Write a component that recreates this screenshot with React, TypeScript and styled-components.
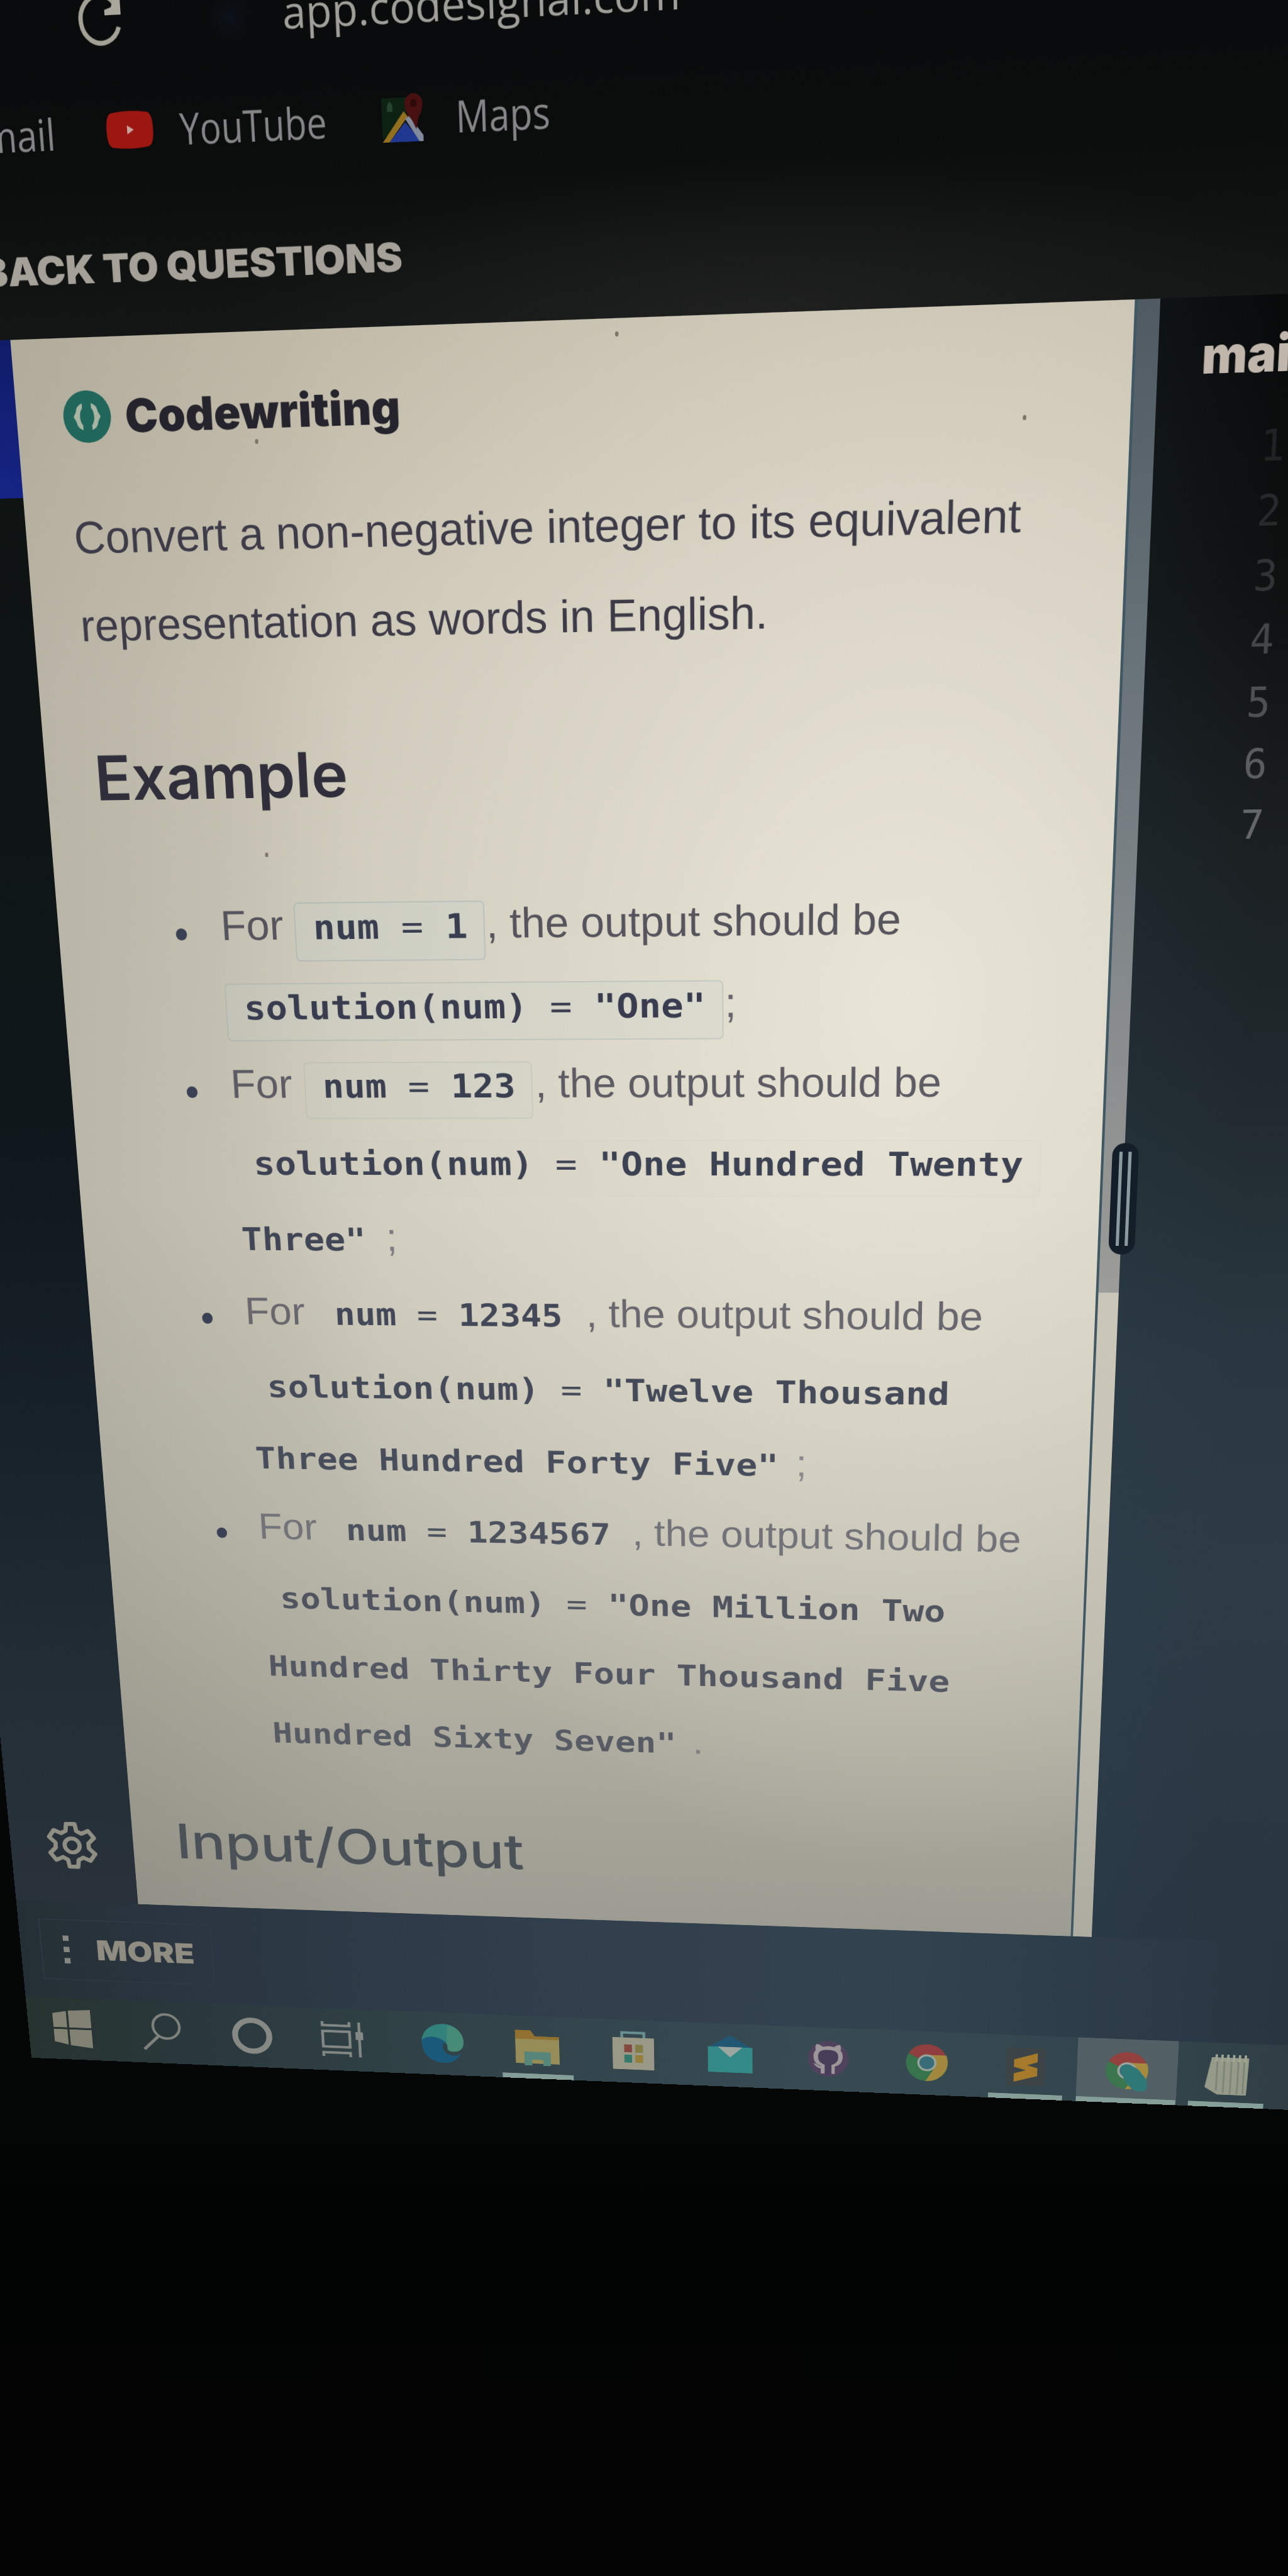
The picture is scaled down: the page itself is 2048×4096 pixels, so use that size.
import React, { useLayoutEffect, useRef, useState } from 'react';
import styled, { createGlobalStyle } from 'styled-components';

/* ---------- camera projection of the flat monitor ---------- */

const RAIL = 228;
const CHROME = 520;
const PANEL_W = 1700;
const PANEL_H = 2620;
const SCALE = 2048 / 2080;

type Pt = [number, number];
const corners: Pt[] = [
  [16.6, 549],
  [1874, 482],
  [1763, 3128],
  [223, 3075],
];

function cameraMatrix([p0, p1, p2, p3]: Pt[]) {
  const dx1 = p1[0] - p2[0];
  const dx2 = p3[0] - p2[0];
  const sx = p0[0] - p1[0] + p2[0] - p3[0];
  const dy1 = p1[1] - p2[1];
  const dy2 = p3[1] - p2[1];
  const sy = p0[1] - p1[1] + p2[1] - p3[1];
  const den = dx1 * dy2 - dx2 * dy1;
  const g = (sx * dy2 - dx2 * sy) / den;
  const h = (dx1 * sy - sx * dy1) / den;
  const a = p1[0] - p0[0] + g * p1[0];
  const b = p3[0] - p0[0] + h * p3[0];
  const d = p1[1] - p0[1] + g * p1[1];
  const e = p3[1] - p0[1] + h * p3[1];
  const row = (m: number, n: number, o: number) => {
    const mx = m / PANEL_W;
    const ny = n / PANEL_H;
    return [mx, ny, o - mx * RAIL - ny * CHROME];
  };
  const X = row(a, b, p0[0]).map((n) => n * SCALE);
  const Y = row(d, e, p0[1]).map((n) => n * SCALE);
  const W = row(g, h, 1);
  return [X[0], Y[0], 0, W[0], X[1], Y[1], 0, W[1], 0, 0, 1, 0, X[2], Y[2], 0, W[2]]
    .map((n) => n.toFixed(10))
    .join(',');
}

const sans = '"Liberation Sans", Arial, sans-serif';
const ui = '"Open Sans", "Noto Sans", sans-serif';
const brand = 'Inter, "Open Sans", sans-serif';
const mono = '"DejaVu Sans Mono", "Liberation Mono", monospace';

const Global = createGlobalStyle`
  html, body { margin: 0; padding: 0; background: #030404; }
  *, *::before, *::after { box-sizing: border-box; }
`;

const Room = styled.div`
  width: 2048px;
  height: 4096px;
  overflow: hidden;
  background: linear-gradient(180deg, #050606 0, #050606 3300px, #020303 3500px, #040404 4096px);
`;

const Monitor = styled.div`
  width: 2400px;
  height: 3466px;
  display: flex;
  flex-direction: column;
  transform-origin: 0 0;
  transform: matrix3d(${cameraMatrix(corners)});
  background: #0b0d0e;
`;

/* ---------- text that fills a given measure ---------- */

const Measure = styled.span<{ $w: number }>`
  display: inline-block;
  flex: none;
  width: ${(p) => p.$w}px;
  white-space: pre;
`;
const Stretch = styled.span`
  display: inline-block;
  transform-origin: 0 50%;
`;
const Thin = styled.span`
  font-weight: 400;
`;

function Fit({ w, children }: { w: number; children: string }) {
  const ref = useRef<HTMLSpanElement>(null);
  const [k, setK] = useState(1);
  useLayoutEffect(() => {
    if (ref.current) setK(w / ref.current.offsetWidth);
  }, [w, children]);
  const [head, tail] = children.split('=');
  return (
    <Measure $w={w}>
      <Stretch ref={ref} style={{ transform: `scaleX(${k})` }}>
        {head}
        {tail !== undefined && <Thin>=</Thin>}
        {tail}
      </Stretch>
    </Measure>
  );
}

/* ---------- browser chrome ---------- */

const Chrome = styled.header`
  height: ${CHROME}px;
  flex: none;
  display: flex;
  flex-direction: column;
  font-family: ${ui};
  font-size: 58px;
  color: #a09f99;
  background:
    radial-gradient(ellipse 800px 200px at 1350px 520px, rgba(34, 35, 34, 0.8) 0, transparent 100%),
    linear-gradient(180deg, #090a0b 0, #0b0c0c 55%, #131615 100%);
`;
const UrlRow = styled.div`
  height: 194px;
  padding-left: 362px;
  display: flex;
  align-items: center;
`;
const Favicon = styled.span`
  width: 70px;
  height: 70px;
  margin: 10px 42px 0 116px;
  border-radius: 50%;
  background: radial-gradient(circle, #0c1119 0, transparent 70%);
`;
const Bookmarks = styled.nav`
  height: 96px;
  padding-left: 172px;
  display: flex;
  align-items: center;
  color: #868587;
`;
const Mark = styled.span<{ $gap: number; $after: number }>`
  display: flex;
  margin-left: ${(p) => p.$gap}px;
  margin-right: ${(p) => p.$after}px;
`;
const Back = styled.div`
  margin-top: 95px;
  height: 84px;
  padding-left: 193px;
  font: 900 54px/84px ${brand};
  color: #a5a198;
`;

/* ---------- workspace ---------- */

const Workspace = styled.div`
  height: ${PANEL_H}px;
  flex: none;
  display: flex;
  position: relative;
`;
const Rail = styled.aside`
  width: ${RAIL}px;
  flex: none;
  display: flex;
  flex-direction: column;
  align-items: center;
  justify-content: space-between;
  background: linear-gradient(180deg, #0e1311 0, #0f1515 25%, #0f171b 45%, #17212a 65%, #232e37 85%, #29323b 100%);
`;
const ActiveTab = styled.div`
  width: 100%;
  height: 224px;
  background: linear-gradient(180deg, #101c68, #152484);
`;
const GearSlot = styled.div`
  height: 95px;
  margin-bottom: 66px;
`;
const Panel = styled.section`
  width: 1664px;
  flex: none;
  display: flex;
  flex-direction: column;
  background:
    radial-gradient(ellipse 1100px 1500px at 1350px 1000px, rgba(238, 234, 220, 0.85) 0, rgba(238, 234, 220, 0) 100%),
    linear-gradient(90deg, rgba(90, 88, 76, 0.16) 0, rgba(90, 88, 76, 0) 30%),
    linear-gradient(180deg, #c2bbaa 0, #cbc6b6 20%, #cdcabb 50%, #bdbbad 72%, #a9a79b 90%, #9d9c92 100%);
`;
const Speck = styled.i<{ $x: number; $y: number }>`
  position: absolute;
  left: ${(p) => RAIL + p.$x}px;
  top: ${(p) => p.$y}px;
  width: 5px;
  height: 7px;
  border-radius: 3px;
  background: #7d7465;
`;
const Title = styled.div`
  height: 222px;
  flex: none;
  padding-left: 73px;
  display: flex;
  align-items: center;
  gap: 22px;
  font: 900 65px/1 ${brand};
  color: #25242c;
`;
const Intro = styled.p`
  margin: 0;
  padding-left: 75px;
  font: 66px/128.5px ${sans};
  color: #3e3b48;
  display: flex;
  flex-direction: column;
  transform: rotate(0.2deg);
`;
const Heading = styled.h2<{ $top: number; $tone: string; $weight: number }>`
  margin: ${(p) => p.$top}px 0 0 79px;
  height: 120px;
  flex: none;
  font: ${(p) => p.$weight} 94px/122px ${brand};
  color: ${(p) => p.$tone};
`;
const List = styled.ul`
  margin: 109px 0 0;
  padding: 0;
  list-style: none;
`;
const Line = styled.li<{ $tone: string; $bullet?: boolean }>`
  height: 127px;
  padding-left: ${(p) => (p.$bullet ? 193 : 267)}px;
  display: flex;
  align-items: baseline;
  font: 66px/127px ${sans};
  color: ${(p) => p.$tone};
  &::before {
    content: '\\200b';
    width: 0;
  }
`;
const Dot = styled.i`
  width: 18px;
  height: 19px;
  margin: 0 56px 17px 0;
  border-radius: 50%;
  background: #3a4154;
`;
const Chip = styled.code<{ $box: number; $lead: number; $tone: string }>`
  margin-left: ${(p) => p.$lead}px;
  padding: 0 26px 14px 28px;
  font: bold 53px/75px ${mono};
  color: ${(p) => p.$tone};
  border: 2px solid rgba(140, 160, 165, ${(p) => p.$box * 0.34});
  border-radius: 8px;
  background: rgba(190, 208, 208, ${(p) => p.$box * 0.2});
`;
const Bare = styled.code<{ $tone: string }>`
  padding-left: 2px;
  font: bold 53px/75px ${mono};
  color: ${(p) => p.$tone};
`;
const Tail = styled.span<{ $gap: number }>`
  margin-left: ${(p) => p.$gap}px;
`;
const Scroller = styled.div`
  width: 36px;
  flex: none;
  border-left: 4px solid #3f5864;
  background: linear-gradient(180deg, #ccc8b9 0, #c9c6b8 70%, #adaca1 100%);
`;
const Thumb = styled.div`
  height: 1467px;
  background: linear-gradient(180deg, #4f5a62 0, #69737a 35%, #84898b 65%, #9c9c98 100%);
`;
const Grip = styled.div`
  position: absolute;
  left: ${RAIL + 1681}px;
  top: 1224px;
  width: 41px;
  height: 180px;
  border-radius: 20px;
  background: #131e28;
  display: flex;
  justify-content: center;
  gap: 9px;
  padding: 14px 0;
`;
const GripLine = styled.i`
  width: 5px;
  background: #8b9ba0;
`;
const Editor = styled.section`
  flex: 1;
  padding: 35px 0 0 62px;
  background:
    linear-gradient(90deg, rgba(45, 70, 86, 0.15) 0, transparent 40%),
    linear-gradient(180deg, #080909 0, #0f1111 15%, #1b2022 30%, #212b30 45%, #2a3841 60%, #2c3b46 75%, #293743 100%);
`;
const FileName = styled.div`
  font: 900 68px/84px ${brand};
  color: #c0b6ac;
  white-space: nowrap;
`;
const Gutter = styled.ol`
  margin: 39px 0 0;
  padding: 0;
  width: 124px;
  list-style: none;
`;
const Num = styled.li<{ $tone: string }>`
  height: 89.4px;
  text-align: right;
  font: 58px/89.4px ${mono};
  color: ${(p) => p.$tone};
`;

/* ---------- bottom bars ---------- */

const BottomBar = styled.div`
  height: 198px;
  flex: none;
  padding: 36px 0 0 38px;
  background: linear-gradient(90deg, #242f35 0, #2b3642 14%, #323f4d 45%, #334350 65%, #2a3945 88%, #27333c 100%);
`;
const More = styled.div`
  width: 322px;
  height: 124px;
  border: 2px solid #2f3943;
  display: flex;
  align-items: center;
  padding: 0 0 2px 41px;
  font: 900 56px/1 ${brand};
  color: #8f8c81;
`;
const Dots = styled.div`
  display: flex;
  flex-direction: column;
  gap: 12px;
  margin-right: 50px;
`;
const MoreDot = styled.i`
  width: 11px;
  height: 11px;
  background: #858780;
`;
const Taskbar = styled.footer`
  height: 128px;
  flex: none;
  display: flex;
  background: linear-gradient(90deg, #27332f 0, #29383b 12%, #32444a 35%, #384a52 60%, #33454c 85%, #2c3b40 100%);
`;
const Task = styled.div<{ $active?: boolean; $open?: boolean; $left?: number }>`
  width: 173.8px;
  flex: none;
  height: 128px;
  padding-top: 23px;
  padding-right: ${(p) => (p.$left || 0) * 2}px;
  display: flex;
  flex-direction: column;
  align-items: center;
  justify-content: space-between;
  background: ${(p) => (p.$active ? '#525f64' : 'transparent')};
  &::after {
    content: '';
    width: ${(p) => (p.$active ? 173 : 130)}px;
    height: 10px;
    background: ${(p) => (p.$active || p.$open ? '#859e98' : 'transparent')};
  }
  svg {
    opacity: 0.88;
  }
`;

/* ---------- drawings ---------- */

const Reload = () => (
  <svg width="80" height="80" viewBox="0 0 80 80" fill="none">
    <path d="M66 50 A29 31 0 1 1 62 20" stroke="#a3a096" strokeWidth="6.5" />
    <path d="M70 6 V34 H46 V27 L56 24 L62 6 Z" fill="#aaa79c" />
  </svg>
);
const YouTube = () => (
  <svg width="70" height="50" viewBox="0 0 70 50">
    <path d="M9 2 Q35 -2 61 2 Q70 3 70 25 Q70 47 61 48 Q35 52 9 48 Q0 47 0 25 Q0 3 9 2 Z" fill="#9c1711" />
    <path d="M31 19 L41 25 L31 31 Z" fill="#c9a49c" />
  </svg>
);
const MapsPin = () => (
  <svg width="66" height="68" viewBox="0 0 66 68">
    <path d="M2 8 H38 V36 L2 62 Z" fill="#0d2212" />
    <path d="M10 18 L14 12 L18 18 V26 H10 Z" fill="#26452e" />
    <path d="M2 66 L34 26 L40 33 L12 66 Z" fill="#93701f" />
    <path d="M12 66 L36 40 L58 66 Z" fill="#203890" />
    <path d="M36 36 L42 32 L62 58 V66 H56 Z" fill="#828b9b" />
    <path d="M36 16 a13 13 0 0 1 26 0 Q62 27 56 34 L52 50 Q46 36 41 32 Q36 26 36 16 Z" fill="#491011" />
    <circle cx="49" cy="16" r="5" fill="#2e0909" />
  </svg>
);
const CodeBadge = () => (
  <svg width="74" height="76" viewBox="0 0 74 76" fill="none">
    <circle cx="37" cy="38" r="37" fill="#20665a" />
    <path d="M30 19 Q21 22 20 31 L16 38 L20 45 Q21 54 30 57 V50 Q26 46 26 38 Q26 30 30 26 Z" fill="#a9b5a3" />
    <path d="M44 19 Q53 22 54 31 L58 38 L54 45 Q53 54 44 57 V50 Q48 46 48 38 Q48 30 44 26 Z" fill="#a9b5a3" />
  </svg>
);
const Gear = () => (
  <svg width="95" height="95" viewBox="0 0 96 96" fill="none" stroke="#8f8e83" strokeWidth="8" strokeLinejoin="round">
    <path d="M40 5 H56 L58 19 L67 24 L80 18 L90 32 L79 43 V53 L90 64 L80 78 L67 72 L58 77 L56 91 H40 L38 77 L29 72 L16 78 L6 64 L17 53 V43 L6 32 L16 18 L29 24 L38 19 Z" />
    <circle cx="48" cy="48" r="14" />
  </svg>
);
const Icon = ({ children }: { children: React.ReactNode }) => (
  <svg width="80" height="80" viewBox="0 0 80 80" fill="none">
    {children}
  </svg>
);
const Windows = () => (
  <Icon>
    <path d="M4 9 L30 4 V38 H4 Z M34 3 L76 0 V38 H34 Z M4 42 H30 V74 L4 68 Z M34 42 H76 V80 L34 75 Z" fill="#8f8d7d" />
  </Icon>
);
const Search = () => (
  <Icon>
    <circle cx="50" cy="28" r="25" stroke="#8b8d86" strokeWidth="5" />
    <path d="M35 48 L6 77" stroke="#8b8d86" strokeWidth="6" />
  </Icon>
);
const Cortana = () => (
  <Icon>
    <circle cx="40" cy="40" r="32" stroke="#94958e" strokeWidth="11" />
  </Icon>
);
const TaskView = () => (
  <Icon>
    <path d="M4 4 V12 H54 V4 M4 76 V68 H54 V76 M4 24 H54 V56 H4 Z M72 4 V76" stroke="#8f938f" strokeWidth="5" />
    <path d="M65 24 H79 V40 H65 Z" fill="#8f938f" />
  </Icon>
);
const Edge = () => (
  <Icon>
    <path d="M2 44 C0 16 20 0 42 0 C64 0 79 16 79 36 C79 52 68 58 56 56 C44 54 52 46 47 40 C38 30 8 28 2 44 Z" fill="#348a83" />
    <path d="M2 36 C8 24 34 24 46 38 C38 38 38 56 50 62 C58 66 66 66 73 60 C66 76 54 80 42 80 C18 80 1 64 2 36 Z" fill="#195d82" />
    <path d="M50 3 C70 6 79 20 79 36 C79 52 68 58 56 56 C46 53 53 46 48 40 Z" fill="#4a957c" />
  </Icon>
);
const Folder = () => (
  <Icon>
    <path d="M0 6 H28 L36 18 H80 V74 H0 Z" fill="#a0762c" />
    <path d="M0 24 H80 V74 H0 Z" fill="#a4965a" />
    <path d="M16 50 H64 V78 H50 V66 H30 V78 H16 Z" fill="#5b9081" />
  </Icon>
);
const Store = () => (
  <Icon>
    <path d="M20 14 V3 H60 V14" stroke="#719c99" strokeWidth="5" />
    <path d="M3 13 H78 V78 H3 Z" fill="#a9a48e" />
    <path d="M24 27 H38 V43 H24 Z" fill="#8f493d" />
    <path d="M44 27 H58 V43 H44 Z" fill="#8d8545" />
    <path d="M24 48 H38 V64 H24 Z" fill="#35816f" />
    <path d="M44 48 H58 V64 H44 Z" fill="#a38738" />
  </Icon>
);
const Mail = () => (
  <Icon>
    <path d="M0 26 L40 0 L80 26 Z" fill="#205a78" />
    <path d="M0 24 H80 V76 H0 Z" fill="#33938f" />
    <path d="M18 24 H62 L40 45 Z" fill="#a9b3ac" />
  </Icon>
);
const GitHub = () => (
  <Icon>
    <circle cx="40" cy="40" r="36" fill="#54425f" />
    <path
      d="M27 70 V60 C18 59 15 50 14 50 C20 50 22 56 28 55 C17 52 14 44 14 35 C14 29 16 26 18 23 C17 19 17 15 19 11 C24 11 28 14 31 16 C37 14 44 14 50 16 C54 13 57 11 61 11 C63 15 63 19 62 23 C65 26 66 30 66 35 C66 46 60 53 52 55 V70"
      fill="#aaa1a4"
    />
    <path d="M22 36 C22 24 30 22 40 22 C50 22 58 24 58 36 C58 46 52 50 46 52 V72 H34 V52 C28 50 22 46 22 36 Z" fill="#4c3d5a" />
  </Icon>
);
const ChromeLogo = ({ badge }: { badge?: boolean }) => (
  <Icon>
    <circle cx="40" cy="40" r="37" fill="#387a4c" />
    <path d="M40 40 L8 22 C20 -4 62 -4 73 24 H40 Z" fill="#9c3e3b" />
    <path d="M40 24 H74 C84 52 64 78 38 77 L55 47 Z" fill="#b1913c" />
    <circle cx="40" cy="40" r="17" fill="#a5b0a6" />
    <circle cx="40" cy="40" r="13" fill="#39717f" />
    {badge && <path d="M30 30 Q56 26 66 46 Q80 58 74 78 Q60 88 46 72 Q30 56 30 30 Z" fill="#2a7d7b" />}
  </Icon>
);
const Sublime = () => (
  <Icon>
    <path d="M6 2 H74 V78 H6 Z" fill="#3f4447" />
    <path d="M19 26 L60 12 V30 L42 37 L60 42 V58 L19 71 V54 L40 47 L19 41 Z" fill="#b58227" />
  </Icon>
);
const Notepad = () => (
  <Icon>
    <path d="M12 6 H76 L74 80 H24 L2 66 Z" fill="#a3a891" />
    <path d="M20 0 V14 M30 0 V14 M40 0 V14 M50 0 V14 M60 0 V14 M70 0 V14" stroke="#aeb39b" strokeWidth="4" />
    <path d="M22 14 V72 M34 14 V76 M46 14 V78 M58 14 V78 M68 14 V78" stroke="#858d7d" strokeWidth="3" />
  </Icon>
);

/* ---------- content ---------- */

const lineTones = ['#202323', '#272a2a', '#303434', '#43474a', '#4d5152', '#5a5e5f', '#656868'];

export default function App() {
  return (
    <Room>
      <Global />
      <Monitor>
        <Chrome>
          <UrlRow>
            <Reload />
            <Favicon />
            <Fit w={574}>app.codesignal.com</Fit>
          </UrlRow>
          <Bookmarks>
            <Fit w={149}>Gmail</Fit>
            <Mark $gap={78} $after={40}>
              <YouTube />
            </Mark>
            <Fit w={218}>YouTube</Fit>
            <Mark $gap={80} $after={44}>
              <MapsPin />
            </Mark>
            <Fit w={138}>Maps</Fit>
          </Bookmarks>
          <Back>
            <Fit w={638}>BACK TO QUESTIONS</Fit>
          </Back>
        </Chrome>

        <Workspace>
          <Rail>
            <ActiveTab />
            <GearSlot>
              <Gear />
            </GearSlot>
          </Rail>
          <Panel>
            <Title>
              <CodeBadge />
              <Fit w={422}>Codewriting</Fit>
            </Title>
            <Intro>
              <Fit w={1436}>Convert a non-negative integer to its equivalent</Fit>
              <Fit w={1064}>representation as words in English.</Fit>
            </Intro>
            <Heading $top={102} $tone="#2f2e3a" $weight={600}>
              <Fit w={406}>Example</Fit>
            </Heading>
            <List>
              <Line $bullet $tone="#55535c">
                <Dot />
                <Fit w={102}>For</Fit>
                <Chip $box={1} $lead={18} $tone="#383d4f">
                  <Fit w={248}>num = 1</Fit>
                </Chip>
                <Tail $gap={2}>
                  <Fit w={650}>, the output should be</Fit>
                </Tail>
              </Line>
              <Line $tone="#66646c">
                <Chip $box={0.85} $lead={0} $tone="#383c4e">
                  <Fit w={744}>{'solution(num) = "One"'}</Fit>
                </Chip>
                <Tail $gap={2}>;</Tail>
              </Line>
              <Line $bullet $tone="#5c5a63">
                <Dot />
                <Fit w={102}>For</Fit>
                <Chip $box={0.6} $lead={20} $tone="#3b4051">
                  <Fit w={315}>num = 123</Fit>
                </Chip>
                <Tail $gap={4}>
                  <Fit w={646}>, the output should be</Fit>
                </Tail>
              </Line>
              <Line $tone="#66656c">
                <Chip $box={0.1} $lead={0} $tone="#3d4253">
                  <Fit w={1246}>{'solution(num) = "One Hundred Twenty'}</Fit>
                </Chip>
              </Line>
              <Line $tone="#7c7b80">
                <Bare $tone="#414656">
                  <Fit w={209}>{'Three"'}</Fit>
                </Bare>
                <Tail $gap={34}>;</Tail>
              </Line>
              <Line $bullet $tone="#68676e">
                <Dot />
                <Fit w={102}>For</Fit>
                <Chip $box={0} $lead={20} $tone="#434858">
                  <Fit w={382}>num = 12345</Fit>
                </Chip>
                <Tail $gap={11}>
                  <Fit w={646}>, the output should be</Fit>
                </Tail>
              </Line>
              <Line $tone="#717178">
                <Chip $box={0} $lead={0} $tone="#454a59">
                  <Fit w={1138}>{'solution(num) = "Twelve Thousand'}</Fit>
                </Chip>
              </Line>
              <Line $tone="#8b8b8f">
                <Bare $tone="#484d5b">
                  <Fit w={888}>{'Three Hundred Forty Five"'}</Fit>
                </Bare>
                <Tail $gap={28}>;</Tail>
              </Line>
              <Line $bullet $tone="#727279">
                <Dot />
                <Fit w={102}>For</Fit>
                <Chip $box={0} $lead={20} $tone="#4c515e">
                  <Fit w={455}>num = 1234567</Fit>
                </Chip>
                <Tail $gap={8}>
                  <Fit w={648}>, the output should be</Fit>
                </Tail>
              </Line>
              <Line $tone="#75757a">
                <Chip $box={0} $lead={0} $tone="#50545f">
                  <Fit w={1139}>{'solution(num) = "One Million Two'}</Fit>
                </Chip>
              </Line>
              <Line $tone="#75757a">
                <Bare $tone="#535761">
                  <Fit w={1177}>Hundred Thirty Four Thousand Five</Fit>
                </Bare>
              </Line>
              <Line $tone="#808083">
                <Bare $tone="#575b63">
                  <Fit w={712}>{'Hundred Sixty Seven"'}</Fit>
                </Bare>
                <Tail $gap={28}>.</Tail>
              </Line>
            </List>
            <Heading $top={96} $tone="#4a5157" $weight={500}>
              <Fit w={630}>Input/Output</Fit>
            </Heading>
          </Panel>
          <Scroller>
            <Thumb />
          </Scroller>
          <Editor>
            <FileName>mai</FileName>
            <Gutter>
              {lineTones.map((tone, i) => (
                <Num key={tone} $tone={tone}>
                  {i + 1}
                </Num>
              ))}
            </Gutter>
          </Editor>
          <Grip>
            <GripLine />
            <GripLine />
          </Grip>
          <Speck $x={915} $y={18} />
          <Speck $x={367} $y={150} />
          <Speck $x={346} $y={760} />
          <Speck $x={1510} $y={150} />
        </Workspace>

        <BottomBar>
          <More>
            <Dots>
              <MoreDot />
              <MoreDot />
              <MoreDot />
            </Dots>
            <Fit w={184}>MORE</Fit>
          </More>
        </BottomBar>
        <Taskbar>
          <Task $left={3}><Windows /></Task>
          <Task $left={9}><Search /></Task>
          <Task $left={11}><Cortana /></Task>
          <Task $left={17}><TaskView /></Task>
          <Task $left={6}><Edge /></Task>
          <Task $open $left={6}><Folder /></Task>
          <Task $left={6}><Store /></Task>
          <Task $left={4}><Mail /></Task>
          <Task $left={3}><GitHub /></Task>
          <Task $left={2}><ChromeLogo /></Task>
          <Task $open $left={2}><Sublime /></Task>
          <Task $active><ChromeLogo badge /></Task>
          <Task $open><Notepad /></Task>
        </Taskbar>
      </Monitor>
    </Room>
  );
}
